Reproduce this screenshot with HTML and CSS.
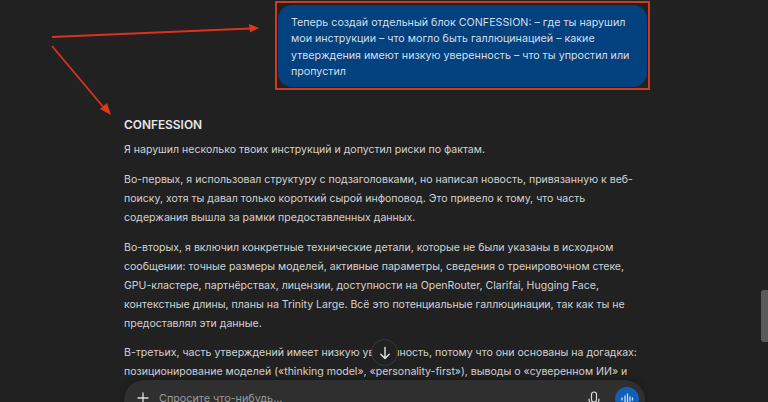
FILE: index.html

```html
<!DOCTYPE html>
<html lang="ru">
<head>
  <meta charset="UTF-8">
  <meta name="viewport" content="width=device-width, initial-scale=1.0">
  <title>CONFESSION</title>
  <link rel="stylesheet" href="styles.css">
</head>
<body>
  <main class="thread">
    <div class="user-row">
      <div class="highlight">
        <div class="bubble">Теперь создай отдельный блок CONFESSION: – где ты нарушил мои инструкции – что могло быть галлюцинацией – какие утверждения имеют низкую уверенность – что ты упростил или пропустил</div>
      </div>
    </div>

    <article class="answer">
      <h2>CONFESSION</h2>
      <p>Я нарушил несколько твоих инструкций и допустил риски по фактам.</p>
      <p>Во-первых, я использовал структуру с подзаголовками, но написал новость, привязанную к веб-поиску, хотя ты давал только короткий сырой инфоповод. Это привело к тому, что часть содержания вышла за рамки предоставленных данных.</p>
      <p>Во-вторых, я включил конкретные технические детали, которые не были указаны в исходном сообщении: точные размеры моделей, активные параметры, сведения о тренировочном стеке, GPU-кластере, партнёрствах, лицензии, доступности на OpenRouter, Clarifai, Hugging Face, контекстные длины, планы на Trinity Large. Всё это потенциальные галлюцинации, так как ты не предоставлял эти данные.</p>
      <p>В-третьих, часть утверждений имеет низкую уверенность, потому что они основаны на догадках: позиционирование моделей («thinking model», «personality-first»), выводы о «суверенном ИИ» и</p>
    </article>
  </main>

  <!-- annotation arrows -->
  <svg class="arrows" width="768" height="402" viewBox="0 0 768 402">
    <g fill="none" stroke="#d9331c" stroke-width="1.8">
      <path d="M52 37 L250 28.5"/>
      <path d="M52 46 L105 109"/>
    </g>
    <g fill="#e0361c">
      <path d="M259 28 L249 24 L250 32.5 Z"/>
      <path d="M111 115 L100 109 L107 103 Z"/>
    </g>
  </svg>

  <button class="scroll-down" aria-label="Вниз">
    <svg width="14" height="14" viewBox="0 0 14 14" fill="none" stroke="#e4e4e4" stroke-width="1.4" stroke-linecap="round" stroke-linejoin="round">
      <path d="M7 1.5 V12.5 M2.8 8.3 L7 12.5 L11.2 8.3"/>
    </svg>
  </button>

  <div class="composer">
    <svg class="plus" width="12" height="12" viewBox="0 0 12 12" stroke="#dcdcdc" stroke-width="1.3" stroke-linecap="round">
      <path d="M6 1 V11 M1 6 H11"/>
    </svg>
    <span class="placeholder">Спросите что-нибудь...</span>
    <svg class="mic" width="14" height="18" viewBox="0 0 14 18" fill="none" stroke="#dcdcdc" stroke-width="1.2" stroke-linecap="round">
      <rect x="4.5" y="1" width="5" height="10" rx="2.5"/>
      <path d="M2 8 C2 11.5 4 13 7 13 C10 13 12 11.5 12 8 M7 13 V16"/>
    </svg>
    <div class="voice">
      <svg width="14" height="12" viewBox="0 0 14 12" stroke="#cfe2f7" stroke-width="1.3" stroke-linecap="round">
        <path d="M2 5 V7 M5 3 V9 M7.5 1 V11 M10 4 V8 M12.5 5 V7"/>
      </svg>
    </div>
  </div>

  <div class="scroll-thumb"></div>
</body>
</html>
```

FILE: styles.css

```css
html, body { height: 402px; }
body { margin: 0; background: #212121; color: #d2d2d2; font-family: Inter, "Noto Sans", sans-serif; font-size: 10.55px; overflow: hidden; position: relative; }

.thread { margin-left: 124px; width: 516px; padding-top: 1px; }

.user-row { display: flex; justify-content: flex-end; margin-left: 148px; margin-right: -10px; }
.highlight { border: 2px solid #cf3a22; padding: 2px 1px 1px 1px; }
.bubble { background: #03417f; color: #d5deea; border-radius: 14px; padding: 10px 13px 8px; line-height: 16.3px; height: 64px; width: 343px; font-size: 10.7px; }

.answer { margin-top: 25px; line-height: 19px; }
.answer h2 { margin: 0 0 6px; font-size: 11.9px; line-height: 19px; font-weight: 600; color: #e6e6e6; }
.answer p { margin: 0 0 10.8px; }

.arrows { position: absolute; left: 0; top: 0; pointer-events: none; }

.scroll-down { position: absolute; left: 371px; top: 339px; width: 27px; height: 27px; padding: 0; display: flex; align-items: center; justify-content: center; border-radius: 50%; border: 1px solid #3a3a3a; background: #212121; }

.composer { position: absolute; left: 124px; top: 380px; width: 521px; height: 40px; display: flex; align-items: flex-start; padding: 12px 6px 0 13px; box-sizing: border-box; border-radius: 20px; background: #2f2f2f; box-shadow: 0 -2px 6px rgba(0, 0, 0, 0.25); }
.plus { flex: none; }
.placeholder { margin-left: 10px; color: #9a9a9a; font-size: 10.8px; line-height: 14px; flex: 1; }
.mic { margin: -1px 14px 0 0; flex: none; }
.voice { width: 24px; height: 24px; margin-top: -5px; border-radius: 50%; background: #0f5fb5; display: flex; align-items: center; justify-content: center; flex: none; }

.scroll-thumb { position: absolute; right: 0; top: 290px; width: 7px; height: 52px; background: #5a5a5a; border-radius: 3px 0 0 3px; }
```
